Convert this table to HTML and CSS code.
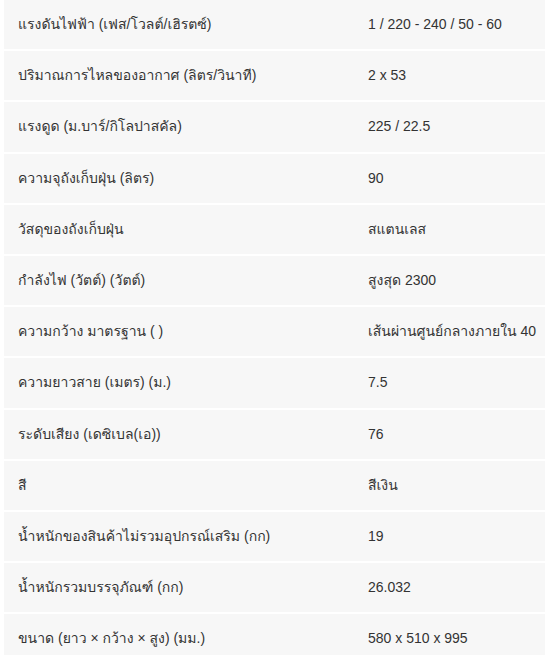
FILE: index.html
```html
<!DOCTYPE html>
<html lang="th">
<head>
<meta charset="utf-8">
<link rel="stylesheet" href="styles.css">
</head>
<body>
<table class="specs">
<tbody>
<tr><td class="k">แรงดันไฟฟ้า (เฟส/โวลต์/เฮิรตซ์)</td><td class="v">1 / 220 - 240 / 50 - 60</td></tr>
<tr><td class="k">ปริมาณการไหลของอากาศ (ลิตร/วินาที)</td><td class="v">2 x 53</td></tr>
<tr><td class="k">แรงดูด (ม.บาร์/กิโลปาสคัล)</td><td class="v">225 / 22.5</td></tr>
<tr><td class="k">ความจุถังเก็บฝุ่น (ลิตร)</td><td class="v">90</td></tr>
<tr><td class="k">วัสดุของถังเก็บฝุ่น</td><td class="v">สแตนเลส</td></tr>
<tr><td class="k">กำลังไฟ (วัตต์) (วัตต์)</td><td class="v">สูงสุด 2300</td></tr>
<tr><td class="k">ความกว้าง มาตรฐาน ( )</td><td class="v">เส้นผ่านศูนย์กลางภายใน 40</td></tr>
<tr><td class="k">ความยาวสาย (เมตร) (ม.)</td><td class="v">7.5</td></tr>
<tr><td class="k">ระดับเสียง (เดซิเบล(เอ))</td><td class="v">76</td></tr>
<tr><td class="k">สี</td><td class="v">สีเงิน</td></tr>
<tr><td class="k">น้ำหนักของสินค้าไม่รวมอุปกรณ์เสริม (กก)</td><td class="v">19</td></tr>
<tr><td class="k">น้ำหนักรวมบรรจุภัณฑ์ (กก)</td><td class="v">26.032</td></tr>
<tr><td class="k">ขนาด (ยาว × กว้าง × สูง) (มม.)</td><td class="v">580 x 510 x 995</td></tr>
</tbody>
</table>
</body>
</html>
```
FILE: styles.css
```css
html, body {
  margin: 0;
  padding: 0;
  background: #ffffff;
}
body {
  padding-left: 4px;
  font-family: "Liberation Sans", "Waree", "Tahoma", "Loma", "Garuda", sans-serif;
  font-size: 14px;
  color: #333333;
}
.specs {
  width: 541px;
  border-collapse: collapse;
  table-layout: fixed;
}
.specs td {
  background: #f7f7f7;
  border-bottom: 2px solid #ffffff;
  padding: 15px 14px;
  line-height: 19.18px;
  vertical-align: middle;
  white-space: nowrap;
}
.specs td.k {
  width: 322px;
}
```
